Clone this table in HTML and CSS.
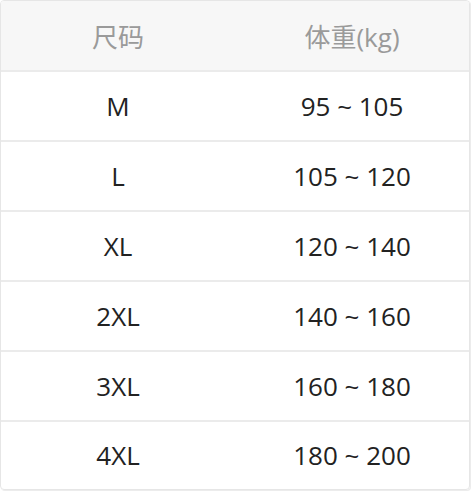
FILE: index.html
```html
<!DOCTYPE html>
<html lang="zh">
<head>
<meta charset="utf-8">
<link rel="stylesheet" href="styles.css">
</head>
<body>
<div class="table">
  <div class="row head"><div class="cell">尺码</div><div class="cell">体重(kg)</div></div>
  <div class="row"><div class="cell">M</div><div class="cell">95 ~ 105</div></div>
  <div class="row"><div class="cell">L</div><div class="cell">105 ~ 120</div></div>
  <div class="row"><div class="cell">XL</div><div class="cell">120 ~ 140</div></div>
  <div class="row"><div class="cell">2XL</div><div class="cell">140 ~ 160</div></div>
  <div class="row"><div class="cell">3XL</div><div class="cell">160 ~ 180</div></div>
  <div class="row"><div class="cell">4XL</div><div class="cell">180 ~ 200</div></div>
</div>
</body>
</html>
```
FILE: styles.css
```css
html, body {
  margin: 0;
  padding: 0;
  background: #ffffff;
}
body {
  width: 472px;
  height: 492px;
  font-family: "Open Sans", "Noto Sans CJK SC", sans-serif;
}
.table {
  width: 470px;
  height: 490px;
  box-sizing: border-box;
  border: 1px solid #e6e6e6;
  border-radius: 4px;
  box-shadow: 1px 1px 0 #ececec;
  overflow: hidden;
  display: flex;
  flex-direction: column;
}
.row {
  display: grid;
  grid-template-columns: 1fr 1fr;
  height: 70px;
  box-sizing: border-box;
  border-top: 2px solid #ebebeb;
  font-size: 26px;
  color: #222222;
}
.row.head {
  height: 69px;
  border-top: none;
  background: #f7f7f7;
  color: #9a9a9a;
}
.row:last-child {
  height: 68px;
}
.cell {
  display: flex;
  align-items: center;
  justify-content: center;
}
```
